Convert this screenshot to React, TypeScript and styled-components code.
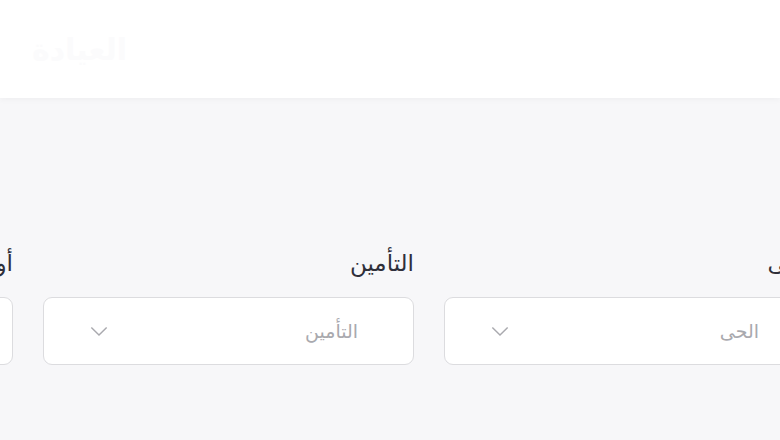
import styled, { createGlobalStyle } from "styled-components";

const GlobalStyle = createGlobalStyle`
    html, body {
        margin: 0;
        padding: 0;
        background: #f7f7f9;
        overflow: hidden;
    }
    body {
        font-family: "DejaVu Sans", "Noto Sans", sans-serif;
    }
`;

const fields = [
    { label: "الحى", placeholder: "الحى" },
    { label: "التأمين", placeholder: "التأمين" },
    { label: "أوقات العمل", placeholder: "أوقات العمل" },
];

export default function App() {
    return <Page>
        <GlobalStyle />
        <Header>
            <Logo>العيادة</Logo>
        </Header>
        <Filters dir="rtl">
            {fields.map((field, fieldi) => (
                <Field key={fieldi}>
                    <Label>{field.label}</Label>
                    <Select>
                        <Placeholder>{field.placeholder}</Placeholder>
                        <Chevron viewBox="0 0 20 12">
                            <path d="M1.5 1.5 L10 10 L18.5 1.5" />
                        </Chevron>
                    </Select>
                </Field>
            ))}
        </Filters>
    </Page>
}

const Page = styled.div`
    width: 780px;
    height: 440px;
    overflow: hidden;
    background: #f7f7f9;
`;

const Header = styled.header`
    height: 98px;
    background: #ffffff;
    box-shadow: 0 2px 6px rgba(0, 0, 0, 0.035);
    display: flex;
    align-items: center;
    padding-left: 32px;
    position: relative;
    z-index: 1;
`;

const Logo = styled.div`
    font-size: 30px;
    font-weight: bold;
    color: #fbfbfc;
    direction: rtl;
`;

const Filters = styled.div`
    display: flex;
    gap: 30px;
    padding-top: 150px;
    margin-right: -35px;
`;

const Field = styled.div`
    flex: 0 0 371px;
    display: flex;
    flex-direction: column;
    gap: 19px;
`;

const Label = styled.div`
    font-size: 23px;
    color: #2f2f3a;
    line-height: 30px;
    white-space: nowrap;
`;

const Select = styled.div`
    height: 68px;
    box-sizing: border-box;
    background: #ffffff;
    border: 1px solid #dcdcdf;
    border-radius: 9px;
    display: flex;
    align-items: center;
    justify-content: space-between;
    padding: 0 55px 0 46px;
`;

const Placeholder = styled.span`
    font-size: 19px;
    color: #a9a9ae;
`;

const Chevron = styled.svg`
    width: 18px;
    height: 11px;
    fill: none;
    stroke: #a9a9ae;
    stroke-width: 1.6;
`;
